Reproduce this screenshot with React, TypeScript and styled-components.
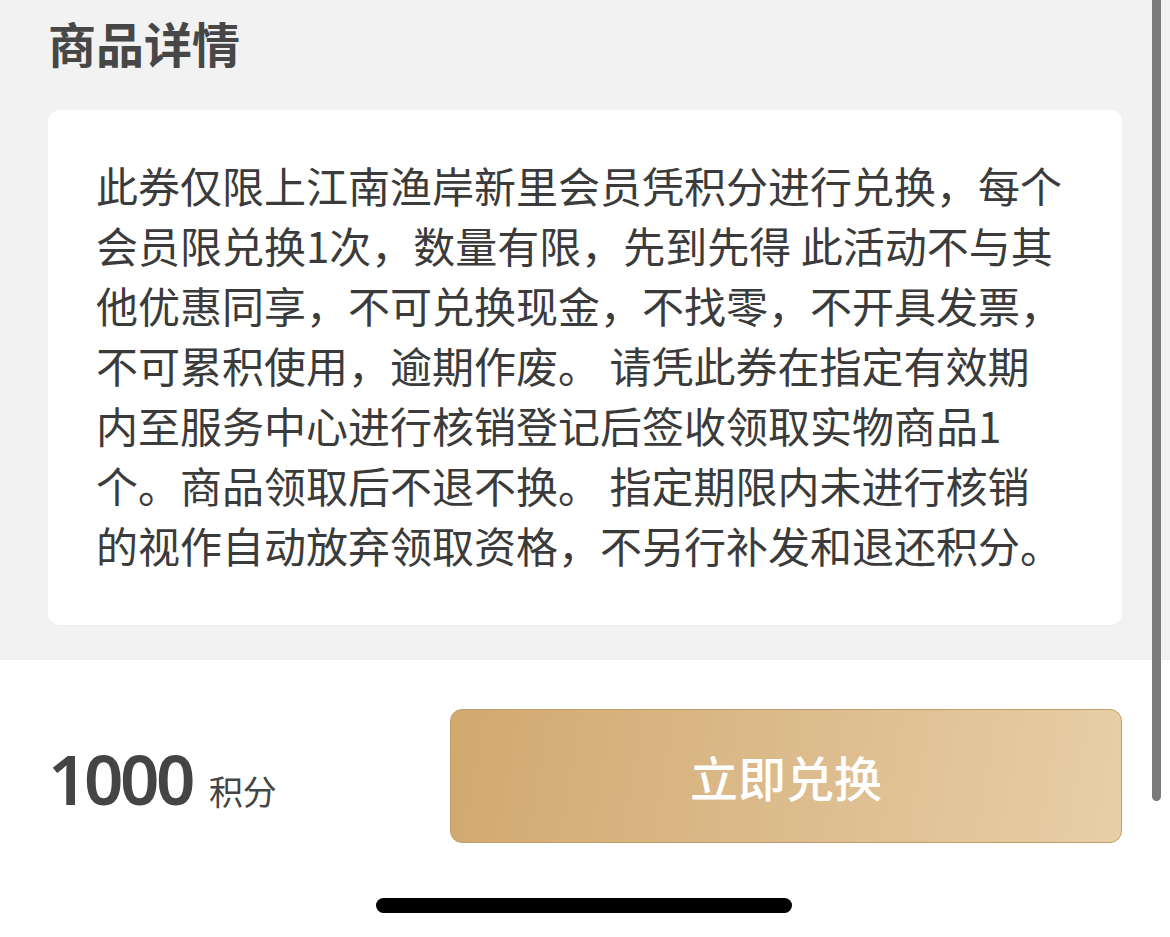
import React from "react";
import styled, { createGlobalStyle } from "styled-components";

const GlobalStyle = createGlobalStyle`
  html, body {
    margin: 0;
    padding: 0;
    background: #ffffff;
  }
  * { box-sizing: border-box; }
  body {
    font-family: "Noto Sans CJK SC", "Noto Sans", sans-serif;
  }
`;

const Screen = styled.div`
  position: relative;
  width: 1170px;
  height: 937px;
  overflow: hidden;
  display: flex;
  flex-direction: column;
  background: #ffffff;
`;

const DetailSection = styled.section`
  height: 660px;
  background: #f2f2f2;
  padding: 9px 48px 0 48px;
  display: flex;
  flex-direction: column;
`;

const Title = styled.h2`
  margin: 0 0 35px 0;
  font-family: "Noto Sans CJK SC", sans-serif;
  font-size: 48px;
  line-height: 66px;
  font-weight: 600;
  color: #474747;
  letter-spacing: 0;
`;

const Card = styled.div`
  background: #ffffff;
  border-radius: 12px;
  padding: 45px 40px 50px 48px;
  box-shadow: 0 1px 3px rgba(0, 0, 0, 0.02);
`;

const Description = styled.p`
  margin: 0;
  font-family: "Noto Sans CJK SC", sans-serif;
  font-size: 42px;
  line-height: 60px;
  font-weight: 400;
  color: #3b3b3b;
  white-space: nowrap;
`;

const BottomBar = styled.div`
  flex: 1;
  display: flex;
  flex-direction: column;
  padding: 49px 48px 0 48px;
`;

const ActionRow = styled.div`
  display: flex;
  align-items: center;
  justify-content: space-between;
`;

const Price = styled.div`
  display: flex;
  align-items: baseline;
  gap: 17px;
  padding-top: 4px;
`;

const PriceValue = styled.span`
  font-family: "Noto Sans", sans-serif;
  font-size: 69px;
  font-weight: 600;
  letter-spacing: -3.5px;
  color: #444444;
  line-height: 1;
`;

const PriceUnit = styled.span`
  font-family: "Noto Sans CJK SC", sans-serif;
  font-size: 34px;
  font-weight: 400;
  color: #454545;
  line-height: 1;
`;

const ExchangeButton = styled.button`
  width: 672px;
  height: 134px;
  border: 1px solid #c39c6a;
  border-radius: 12px;
  background: linear-gradient(100deg, #d1a96f 0%, #dcbb8c 50%, #e8cfa7 100%);
  color: #ffffff;
  font-family: "Noto Sans CJK SC", sans-serif;
  font-size: 48px;
  font-weight: 500;
  display: flex;
  align-items: center;
  justify-content: center;
  padding: 0;
  cursor: pointer;
`;

const HomeIndicatorRow = styled.div`
  display: flex;
  justify-content: center;
  padding-top: 55px;
`;

const HomeIndicator = styled.div`
  width: 416px;
  height: 15px;
  border-radius: 8px;
  background: #000000;
  margin-left: -3px;
`;

const ScrollThumb = styled.div`
  position: absolute;
  top: 0;
  right: 9px;
  width: 9px;
  height: 801px;
  background: #7b7b7b;
  border-radius: 0 0 5px 5px;
`;

const lines = [
  "此券仅限上江南渔岸新里会员凭积分进行兑换，每个",
  "会员限兑换1次，数量有限，先到先得 此活动不与其",
  "他优惠同享，不可兑换现金，不找零，不开具发票，",
  "不可累积使用，逾期作废。 请凭此券在指定有效期",
  "内至服务中心进行核销登记后签收领取实物商品1",
  "个。商品领取后不退不换。 指定期限内未进行核销",
  "的视作自动放弃领取资格，不另行补发和退还积分。",
];

export default function App() {
  return (
    <>
      <GlobalStyle />
      <Screen>
        <DetailSection>
          <Title>商品详情</Title>
          <Card>
            <Description>
              {lines.map((l, i) => (
                <React.Fragment key={i}>
                  {l}
                  {i < lines.length - 1 && <br />}
                </React.Fragment>
              ))}
            </Description>
          </Card>
        </DetailSection>
        <BottomBar>
          <ActionRow>
            <Price>
              <PriceValue>1000</PriceValue>
              <PriceUnit>积分</PriceUnit>
            </Price>
            <ExchangeButton>立即兑换</ExchangeButton>
          </ActionRow>
          <HomeIndicatorRow>
            <HomeIndicator />
          </HomeIndicatorRow>
        </BottomBar>
        <ScrollThumb />
      </Screen>
    </>
  );
}
